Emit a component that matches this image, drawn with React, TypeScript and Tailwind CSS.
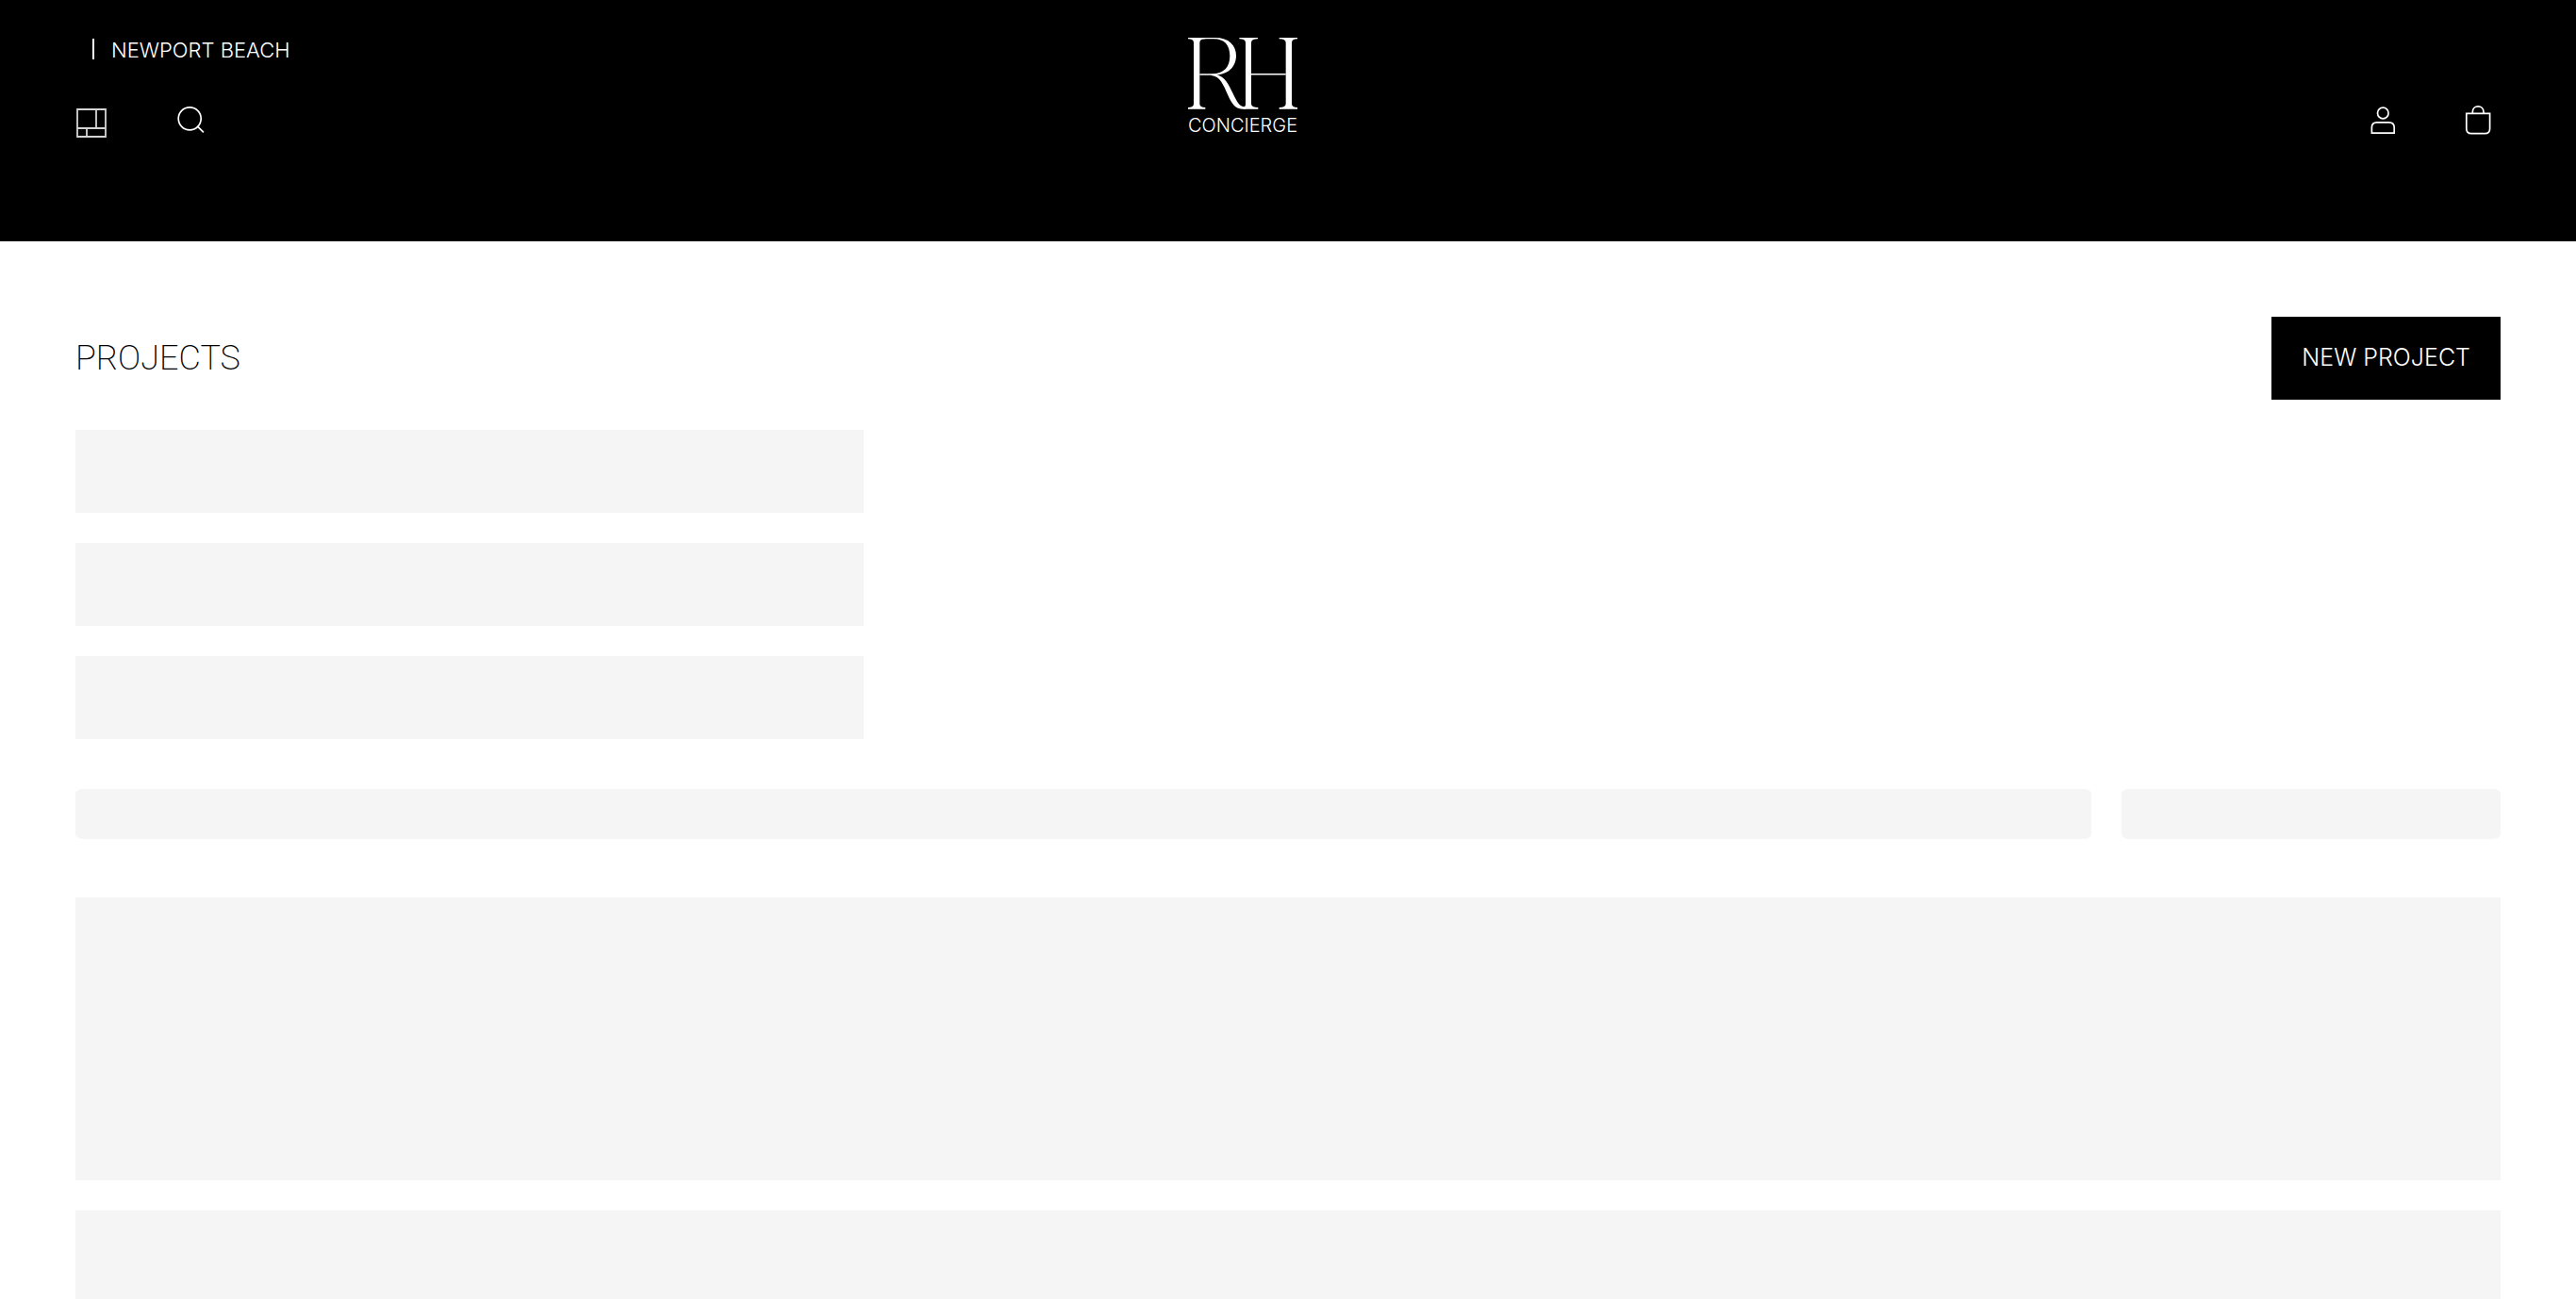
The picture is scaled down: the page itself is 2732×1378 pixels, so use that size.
import React from "react";

function GalleryIcon() {
  return (
    <svg width="34" height="40" viewBox="0 0 34 40" fill="none" stroke="#d4d4d4" strokeWidth="1.8" aria-hidden="true">
      <path d="M2 6H32V35H2ZM2 26H32M22 6V26M12 26V35" />
    </svg>
  );
}

function SearchIcon() {
  return (
    <svg width="40" height="40" viewBox="0 0 40 40" fill="none" stroke="#fff" strokeWidth="1.7" aria-hidden="true">
      <circle cx="17.2" cy="15.8" r="12" />
      <path d="M25.3 23.8L31.9 30.4" />
    </svg>
  );
}

function AccountIcon() {
  return (
    <svg width="40" height="40" viewBox="0 0 40 40" fill="none" stroke="#fff" strokeWidth="1.7" aria-hidden="true">
      <circle cx="20.300" cy="10" r="5.8" />
      <path d="M8.4 31.1V25.3Q8.4 19.8 13.9 19.8H26.7Q32.2 19.8 32.2 25.3V31.1Z" />
    </svg>
  );
}

function BagIcon() {
  return (
    <svg width="40" height="40" viewBox="0 0 40 40" fill="none" stroke="#fff" strokeWidth="1.7" aria-hidden="true">
      <path d="M7.8 10.4H32.6V26.5Q32.6 31.7 27.4 31.7H13Q7.8 31.7 7.8 26.5Z" />
      <path d="M14.3 10.4V8.9C14.3 0.9 26 0.9 26 8.9V10.4" />
    </svg>
  );
}

function Monogram() {
  return (
    <svg className="block" width="118" height="76" viewBox="57 60 354 228" fill="#fff" aria-hidden="true">
      {/* left stem with its serifs */}
      <path d="M60 60H115V64Q97 64 97 76V271Q97 282 115 282V287H60V282Q78 282 78 271V76Q78 64 60 64Z" />
      {/* bowl */}
      <path d="M97 60H146C190 60 213 84 213 117C213 153 187 179 142 179H97V175H136C174 175 193 153 193 118C193 83 175 64 142 64H97Z" />
      {/* sweeping leg that runs into the next stem */}
      <path d="M134 177H150C177 184 189 208 203 238C216 265 224 281 243 281V287H236C210 287 199 270 187 243C172 209 162 183 134 180Z" />
      {/* second and third stems with the hairline between them */}
      <path d="M223 60H282V64Q261 64 261 76V271Q261 282 283 282V287H236V281Q243 281 243 271V76Q243 64 223 64Z" />
      <path d="M350 60H408V64Q390 64 390 76V271Q390 282 408 282V287H350V282Q371 282 371 271V76Q371 64 350 64Z" />
      <path d="M261 174H371V178.500H261Z" />
    </svg>
  );
}

function Header() {
  return (
    <header className="grid h-64 grid-cols-[1fr_auto_1fr] bg-black px-20 pt-8 text-white">
      <div>
        <div className="flex h-10 items-center pl-[18px]">
          <span className="h-[22px] w-0.5 bg-white" />
          <a href="#" className="pl-[18px] pt-0.5 text-[22px] leading-8 font-light">
            NEWPORT BEACH
          </a>
        </div>
        <nav className="mt-[38px] flex gap-[70px]">
          <button type="button" aria-label="Gallery menu"><GalleryIcon /></button>
          <button type="button" aria-label="Search"><SearchIcon /></button>
        </nav>
      </div>
      <div className="pt-2 pr-24">
        <a href="#" aria-label="RH Concierge" className="block w-[118px]">
          <Monogram />
          <span className="mt-[7px] block text-center text-xl leading-5 font-light">CONCIERGE</span>
        </a>
      </div>
      <div className="flex items-start justify-end gap-[61px] pt-[78px] pr-1">
        <button type="button" aria-label="Account"><AccountIcon /></button>
        <button type="button" aria-label="Shopping bag"><BagIcon /></button>
      </div>
    </header>
  );
}

export default function App() {
  return (
    <div className="h-screen overflow-hidden bg-white font-['Inter',sans-serif] text-black">
      <Header />
      <main className="px-20 pt-20">
        <div className="flex h-[88px] items-center justify-between">
          <h1 className="font-['Roboto',sans-serif] text-4xl font-extralight">PROJECTS</h1>
          <button type="button" className="h-full bg-black px-8 text-[25px] font-light text-white">
            NEW PROJECT
          </button>
        </div>
        <div className="mt-8 grid grid-cols-3 gap-8">
          {[0, 1, 2].map((i) => (
            <div key={i} className="col-start-1 h-[88px] bg-[#f5f5f5]" />
          ))}
        </div>
        <div className="mt-[53px] grid grid-cols-12 gap-8">
          <div className="col-span-10 h-[53px] rounded-[8px/5px] bg-[#f5f5f5]" />
          <div className="col-span-2 h-[53px] rounded-[8px/5px] bg-[#f5f5f5]" />
        </div>
        <div className="mt-[62px] flex flex-col gap-8">
          <div className="h-[300px] bg-[#f5f5f5]" />
          <div className="h-[300px] bg-[#f5f5f5]" />
        </div>
      </main>
    </div>
  );
}
